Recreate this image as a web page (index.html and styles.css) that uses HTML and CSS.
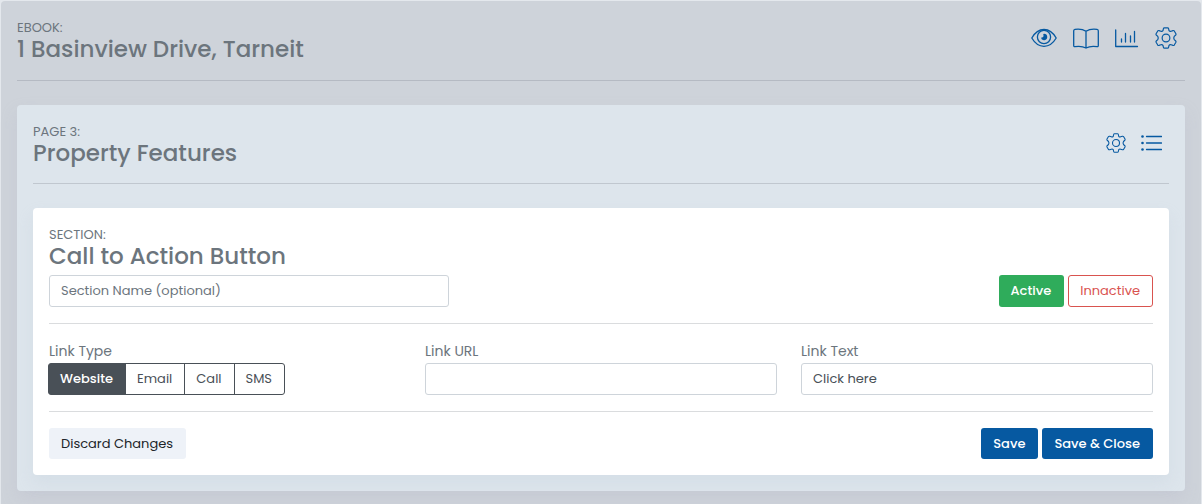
FILE: index.html
```html
<!DOCTYPE html>
<html lang="en">
<head>
<meta charset="UTF-8">
<meta name="viewport" content="width=device-width, initial-scale=1.0">
<title>1 Basinview Drive, Tarneit</title>
<link rel="stylesheet" href="styles.css">
</head>
<body>
    <main class="ebook">
        <header class="head head-ebook">
            <div>
                <p class="kicker">EBOOK:</p>
                <h1 class="title">1 Basinview Drive, Tarneit</h1>
            </div>
            <nav class="icons">
                <a href="#" aria-label="Preview">
                    <svg width="26" height="20" viewBox="0 0 26 20">
                        <path d="M.8 10C4 4.500 8 1.500 13 1.500S22 4.500 25.200 10C22 15.500 18 18.300 13 18.300S4 15.500.8 10z"/>
                        <circle cx="13" cy="9" r="6.600"/>
                        <path class="solid" d="M13 5.800a3.200 3.200 0 1 1-3.100 3.800c1.800.6 3.400-1.200 2.300-3 .2-.5.500-.7.800-.8z"/>
                    </svg>
                </a>
                <a href="#" aria-label="Pages">
                    <svg width="26" height="21" viewBox="0 0 26 21">
                        <path d="M13 3.200C10 1.200 6 .8 2 1.300Q.7 1.500.7 2.800V17.500Q.7 18.800 2 18.600C6 18 10 18.300 13 20C16 18.300 20 18 24 18.600Q25.300 18.800 25.300 17.500V2.800Q25.300 1.500 24 1.300C20 .8 16 1.200 13 3.200zM13 3.200V20"/>
                    </svg>
                </a>
                <a href="#" aria-label="Statistics">
                    <svg width="24" height="20" viewBox="0 0 24 20">
                        <path d="M.7 2V18.500H22.500M6.500 11V14M10.500 5.500V14M15.500 8V14M19.500 3.500V14"/>
                    </svg>
                </a>
                <a href="#" aria-label="Ebook settings">
                    <svg width="22" height="22" viewBox="0 0 24 24">
                        <path d="M10.200.9h3.600q.8 0 1 .9l.5 2.200q.9 1.100 2.300.6l2-.7q.9-.3 1.400.4l1.800 3q.4.8-.2 1.400l-1.600 1.500q-1.100 1.800 0 3.600l1.600 1.500q.6.6.2 1.400l-1.800 3q-.5.7-1.400.4l-2-.7q-1.400-.5-2.300.6l-.5 2.200q-.2.9-1 .9h-3.600q-.8 0-1-.9l-.5-2.200q-.9-1.100-2.300-.6l-2 .7q-.9.3-1.400-.4l-1.800-3q-.4-.8.2-1.400L3 13.800q1.100-1.800 0-3.600L1.400 8.700q-.6-.6-.2-1.400l1.800-3q.5-.7 1.400-.4l2 .7q1.400.5 2.300-.6l.5-2.200q.2-.9 1-.9z"/>
                        <circle cx="12" cy="12" r="4.200"/>
                    </svg>
                </a>
            </nav>
        </header>

        <section class="page">
            <header class="head">
                <div>
                    <p class="kicker">PAGE 3:</p>
                    <h2 class="title">Property Features</h2>
                </div>
                <nav class="icons icons-page">
                    <a href="#" aria-label="Page settings">
                        <svg width="20" height="20" viewBox="0 0 24 24">
                            <path d="M10.200.9h3.600q.8 0 1 .9l.5 2.200q.9 1.100 2.300.6l2-.7q.9-.3 1.400.4l1.800 3q.4.8-.2 1.400l-1.600 1.500q-1.100 1.800 0 3.600l1.600 1.500q.6.6.2 1.400l-1.800 3q-.5.7-1.400.4l-2-.7q-1.400-.5-2.300.6l-.5 2.200q-.2.9-1 .9h-3.600q-.8 0-1-.9l-.5-2.200q-.9-1.100-2.300-.6l-2 .7q-.9.3-1.400-.4l-1.800-3q-.4-.8.2-1.400L3 13.800q1.100-1.800 0-3.600L1.400 8.700q-.6-.6-.2-1.400l1.800-3q.5-.7 1.400-.4l2 .7q1.400.5 2.300-.6l.5-2.200q.2-.9 1-.9z"/>
                            <circle cx="12" cy="12" r="4.200"/>
                        </svg>
                    </a>
                    <a href="#" aria-label="Page sections">
                        <svg width="21" height="16" viewBox="0 0 21 16">
                            <path d="M5.500 1.500H20.500M5.500 8H20.500M5.500 14.500H20.500"/>
                            <circle class="solid" cx="1.500" cy="1.500" r="1.300"/>
                            <circle class="solid" cx="1.500" cy="8" r="1.300"/>
                            <circle class="solid" cx="1.500" cy="14.500" r="1.300"/>
                        </svg>
                    </a>
                </nav>
            </header>

            <form class="section">
                <p class="kicker">SECTION:</p>
                <h3 class="title">Call to Action Button</h3>
                <div class="row row-name">
                    <input type="text" class="control control-name" aria-label="Section Name" placeholder="Section Name (optional)">
                    <div class="buttons">
                        <button type="button" class="btn btn-active">Active</button>
                        <button type="button" class="btn btn-inactive">Innactive</button>
                    </div>
                </div>

                <div class="fields">
                    <fieldset class="field">
                        <legend class="label">Link Type</legend>
                        <div class="group">
                            <input type="radio" name="linkType" id="typeWebsite" checked>
                            <label for="typeWebsite">Website</label>
                            <input type="radio" name="linkType" id="typeEmail">
                            <label for="typeEmail">Email</label>
                            <input type="radio" name="linkType" id="typeCall">
                            <label for="typeCall">Call</label>
                            <input type="radio" name="linkType" id="typeSms">
                            <label for="typeSms">SMS</label>
                        </div>
                    </fieldset>
                    <div class="field">
                        <label class="label" for="linkUrl">Link URL</label>
                        <input type="text" class="control" id="linkUrl">
                    </div>
                    <div class="field">
                        <label class="label" for="linkText">Link Text</label>
                        <input type="text" class="control" id="linkText" value="Click here">
                    </div>
                </div>

                <div class="row">
                    <button type="reset" class="btn btn-light">Discard Changes</button>
                    <div class="buttons">
                        <button type="submit" class="btn btn-primary">Save</button>
                        <button type="submit" class="btn btn-primary">Save &amp; Close</button>
                    </div>
                </div>
            </form>
        </section>
    </main>
</body>
</html>
```
FILE: styles.css
```css
* {
    box-sizing: border-box;
}

body {
    margin: 0;
    padding: 1px 1px 0;
    background-color: #e4e8ed;
    color: #6c757d;
    font-family: Poppins, Inter, sans-serif;
    font-size: 13px;
}

.ebook {
    min-height: calc(100vh - 1px);
    padding: 16px 16px 13px;
    background-color: #ced3da;
    border-radius: 4px 4px 0 0;
}

.page {
    padding: 16px;
    background-color: #dde5ec;
    border-radius: 4px;
    box-shadow: 0 8px 16px rgba(180, 180, 200, 0.25);
}

.section {
    padding: 16px;
    background-color: #fff;
    border-radius: 4px;
    box-shadow: 0 8px 16px rgba(180, 195, 210, 0.2);
}

/* headings */
.head {
    display: flex;
    justify-content: space-between;
    align-items: center;
    margin-bottom: 24px;
    padding-bottom: 20px;
    border-bottom: 1px solid #c0c7cf;
}

.head-ebook {
    padding-bottom: 21px;
    border-color: #b5bac3;
}

.kicker {
    margin: 0;
    font-size: 13px;
    line-height: 22px;
}

.title {
    margin: 0;
    font-size: 23px;
    font-weight: 500;
    line-height: 20px;
}

.icons {
    display: flex;
    align-items: center;
    gap: 16px;
    padding-right: 8px;
}

.icons-page {
    gap: 15px;
    padding: 2px 7px 0 0;
}

.icons a {
    display: flex;
}

.icons svg {
    fill: none;
    stroke: #0659a1;
    stroke-width: 1.3;
    stroke-linejoin: round;
    stroke-linecap: round;
}

.icons .solid {
    fill: #0659a1;
    stroke: none;
}

/* form */
.row {
    display: flex;
    justify-content: space-between;
}

.row-name {
    margin-top: 9px;
}

.control {
    width: 100%;
    height: 32px;
    padding: 0 11px;
    border: 1px solid #ced4da;
    border-radius: 3px;
    background-color: #fff;
    color: #495057;
    font: inherit;
}

.control-name {
    width: 400px;
}

.control::placeholder {
    color: #6c757d;
    opacity: 1;
}

.fields {
    display: grid;
    grid-template-columns: repeat(3, 1fr);
    gap: 24px;
    margin: 16px 0;
    padding: 16px 0;
    border-top: 1px solid #dadcde;
    border-bottom: 1px solid #dadcde;
}

.field {
    min-width: 0;
    margin: 0;
    padding: 0;
    border: 0;
}

.label {
    display: block;
    padding: 0;
    font-size: 14px;
    line-height: 23px;
}

.group {
    display: flex;
    margin-left: -1px;
}

.group input {
    position: absolute;
    opacity: 0;
}

.group label {
    height: 32px;
    margin-right: -1px;
    padding: 0 12px 0 11px;
    border: 1px solid #495057;
    color: #495057;
    line-height: 30px;
    cursor: pointer;
}

.group label:first-of-type {
    border-radius: 3px 0 0 3px;
}

.group label:last-of-type {
    border-radius: 0 3px 3px 0;
}

.group input:checked + label {
    background-color: #495057;
    color: #fff;
    font-weight: 500;
}

.buttons {
    display: flex;
    gap: 4px;
}

.btn {
    height: 31px;
    padding: 0 12px 0 11px;
    border: 1px solid transparent;
    border-radius: 3px;
    font: inherit;
    cursor: pointer;
}

.row-name .btn {
    height: 32px;
}

.btn-active {
    background-color: #2fac5b;
    color: #fff;
    font-weight: 500;
}

.btn-inactive {
    border-color: #d9534f;
    background-color: #fff;
    color: #d9534f;
}

.btn-light {
    background-color: #eef2f8;
    color: #212529;
}

.btn-primary {
    background-color: #0659a1;
    color: #fff;
    font-weight: 500;
}
```
